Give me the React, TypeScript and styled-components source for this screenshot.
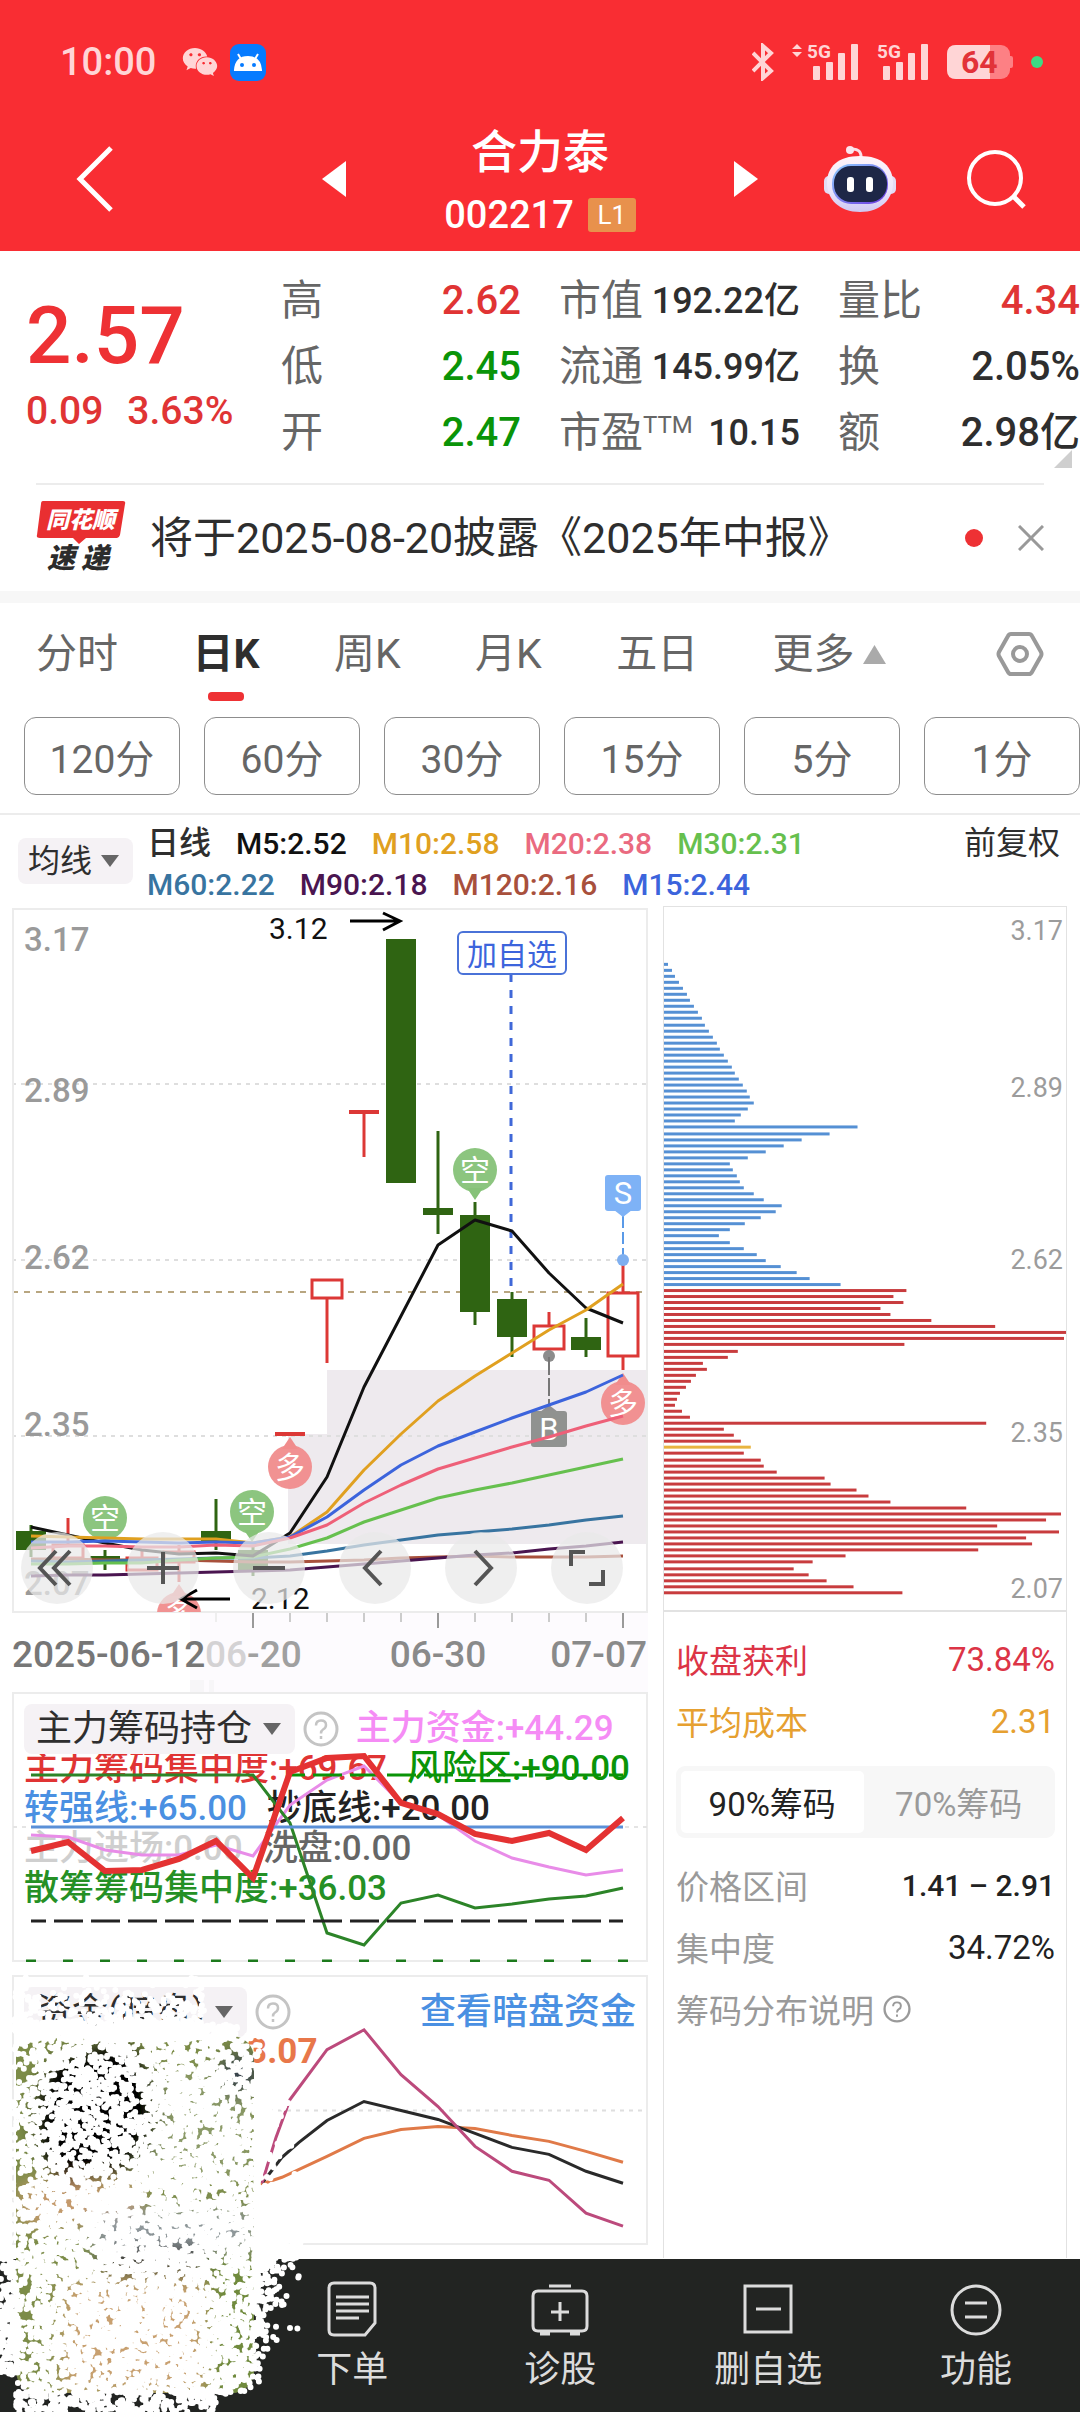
import React from "react";
import styled, { createGlobalStyle, css } from "styled-components";
import { FaWeixin } from "react-icons/fa";

const FONT = `Roboto, "Noto Sans CJK SC", sans-serif`;

const color = {
  brand: "#f92d33",
  rise: "#e03434",
  fall: "#0a9408",
  ink: "#2e2e2e",
  mid: "#666666",
  soft: "#9a9a9a",
  line: "#ececec",
  pill: "#f5f2f5",
  blue: "#4a90e2",
};

const Global = createGlobalStyle`
  *, *::before, *::after { box-sizing: border-box; }
  body { margin: 0; background: #fff; font-family: ${FONT}; color: ${color.ink}; }
  button, select { font-family: inherit; color: inherit; background: none; border: 0; padding: 0; margin: 0; cursor: pointer; }
  svg { display: block; flex: none; }
  p, h1, dl, dt, dd { margin: 0; font-weight: inherit; }
`;

const Page = styled.div`
  position: relative;
  display: flex;
  flex-direction: column;
  min-height: 100vh;
  overflow: hidden;
`;

/* ---------- header ---------- */

const Header = styled.header`
  background: ${color.brand};
  color: #fff;
`;

const StatusBar = styled.div`
  display: flex;
  align-items: center;
  justify-content: space-between;
  height: 116px;
  padding: 8px 37px 0 60px;
  color: #ffd5d6;
`;

const StatusGroup = styled.div<{ $gap: number }>`
  display: flex;
  align-items: center;
  gap: ${(p) => p.$gap}px;
`;

const Clock = styled.span`
  font-size: 38px;
  font-weight: 500;
  line-height: 40px;
  margin-right: 14px;
`;

const LiveDot = styled.span<{ $size: number; $fill: string }>`
  width: ${(p) => p.$size}px;
  height: ${(p) => p.$size}px;
  border-radius: 50%;
  background: ${(p) => p.$fill};
  flex: none;
`;

const TitleBar = styled.div`
  display: grid;
  grid-template-columns: 1fr 436px 1fr;
  align-items: center;
  height: 135px;
  padding-bottom: 9px;
`;

const BackSide = styled.div`
  padding-left: 76px;
`;

const ToolSide = styled.div`
  display: flex;
  justify-content: flex-end;
  align-items: center;
  gap: 70px;
  padding-right: 54px;
`;

const IconButton = styled.button`
  display: flex;
  align-items: center;
  justify-content: center;
`;

const Stepper = styled.div`
  display: flex;
  align-items: center;
  justify-content: space-between;
`;

const StockTitle = styled.div`
  display: flex;
  flex-direction: column;
  align-items: center;
`;

const StockName = styled.h1`
  font-size: 46px;
  font-weight: 500;
  line-height: 72px;
`;

const StockCode = styled.p`
  display: flex;
  align-items: center;
  gap: 14px;
  font-size: 38px;
  font-weight: 500;
  line-height: 54px;
`;

const LevelBadge = styled.span`
  width: 48px;
  border-radius: 3px;
  background: #e8914c;
  font-size: 26px;
  font-weight: 400;
  line-height: 34px;
  text-align: center;
`;

/* ---------- quote ---------- */

const Quote = styled.section`
  position: relative;
  display: grid;
  grid-template-columns: 217fr 240fr 241fr 242fr;
  column-gap: 38px;
  padding: 17px 0 17px 26px;
`;

const PriceBox = styled.div`
  color: ${color.rise};
  padding-top: 18px;
`;

const Price = styled.p`
  color: #ee3134;
  font-size: 80px;
  font-weight: 500;
  line-height: 100px;
`;

const Change = styled.p`
  display: flex;
  gap: 24px;
  font-size: 39px;
  font-weight: 500;
  line-height: 50px;
  white-space: nowrap;
`;

const Stats = styled.dl``;

const Stat = styled.div`
  display: flex;
  justify-content: space-between;
  align-items: center;
  height: 66px;
  line-height: 66px;
  white-space: nowrap;
`;

const StatName = styled.dt`
  color: ${color.mid};
  font-size: 42px;
  display: flex;
`;

const Sup = styled.sup`
  font-size: 24px;
  line-height: 50px;
`;

const StatValue = styled.dd<{ $tone?: string; $small?: boolean }>`
  color: ${(p) => p.$tone ?? color.ink};
  font-size: ${(p) => (p.$small ? 36 : 40)}px;
  font-weight: 500;
`;

const Corner = styled.span`
  position: absolute;
  right: 8px;
  bottom: 15px;
  border-left: 18px solid transparent;
  border-bottom: 18px solid #cfcfcf;
`;

const Notice = styled.section`
  display: flex;
  align-items: center;
  margin: 0 36px;
  height: 108px;
  border-top: 2px solid ${color.line};
`;

const NoticeLink = styled.a`
  flex: 1;
  margin-left: 24px;
  color: ${color.ink};
  font-size: 43px;
  line-height: 60px;
  text-decoration: none;
`;

const Band = styled.div`
  height: 12px;
  background: #f7f7f7;
`;

/* ---------- period tabs ---------- */

const Tabs = styled.nav`
  display: flex;
  align-items: center;
  justify-content: space-between;
  height: 102px;
  padding: 0 36px;
`;

const Tab = styled.button<{ $on?: boolean }>`
  position: relative;
  display: flex;
  align-items: center;
  gap: 8px;
  color: ${(p) => (p.$on ? color.ink : color.mid)};
  font-size: 41px;
  font-weight: ${(p) => (p.$on ? 700 : 400)};
  line-height: 60px;
  ${(p) =>
    p.$on &&
    css`
      &::after {
        content: "";
        position: absolute;
        left: 50%;
        bottom: -17px;
        width: 36px;
        height: 9px;
        margin-left: -18px;
        border-radius: 4px;
        background: #ee3134;
      }
    `}
`;

const LastTab = styled(Tab)`
  margin-right: 36px;
`;

const Minutes = styled.div`
  display: grid;
  grid-template-columns: repeat(6, 1fr);
  gap: 24px;
  padding: 12px 0 18px 24px;
  border-bottom: 2px solid ${color.line};
`;

const Minute = styled.button`
  height: 78px;
  border: 1px solid #8d8d8d;
  border-radius: 12px;
  color: ${color.mid};
  font-size: 39px;
`;

/* ---------- averages ---------- */

const Averages = styled.section`
  display: flex;
  align-items: flex-start;
  gap: 14px;
  height: 91px;
  padding: 8px 20px 0 18px;
`;

const AverageLines = styled.div`
  flex: 1;
  font-size: 30px;
  font-weight: 500;
  line-height: 41px;
`;

const AverageLine = styled.div`
  display: flex;
  gap: 25px;
`;

const LineName = styled.span`
  font-size: 32px;
`;

const Tint = styled.span<{ $tone: string }>`
  color: ${(p) => p.$tone};
`;

const Adjust = styled.button`
  font-size: 32px;
  line-height: 41px;
`;

const PickerWrap = styled.label<{ $low?: boolean }>`
  position: relative;
  display: inline-flex;
  align-items: center;
  flex: none;
  margin-top: ${(p) => (p.$low ? 15 : 0)}px;
`;

const Select = styled.select<{ $size: number }>`
  appearance: none;
  height: ${(p) => p.$size + 14}px;
  padding: 0 ${(p) => (p.$size > 33 ? 42 : 40)}px 0 ${(p) => (p.$size > 33 ? 12 : 10)}px;
  border-radius: 8px;
  background: ${color.pill};
  font-size: ${(p) => p.$size}px;
  line-height: ${(p) => p.$size + 14}px;
`;

const PickerArrow = styled.span`
  position: absolute;
  right: 14px;
  border: 9px solid transparent;
  border-top: 12px solid ${color.mid};
  border-bottom: 0;
  pointer-events: none;
`;

/* ---------- workspace ---------- */

const Workspace = styled.main`
  display: grid;
  grid-template-columns: 636fr 404fr;
  column-gap: 15px;
  padding: 0 13px 0 12px;
`;

const Column = styled.div`
  padding: 2px 0 13px;
`;

const ChartArea = styled.div`
  position: relative;
`;

const Drawing = styled.svg`
  width: 100%;
  height: auto;
  font-family: ${FONT};
`;

const FloatBar = styled.div`
  position: absolute;
  left: 9px;
  right: 25px;
  bottom: 88px;
  display: flex;
  justify-content: space-between;
`;

const FloatButton = styled.button`
  width: 72px;
  height: 72px;
  border-radius: 50%;
  background: rgba(233, 233, 233, 0.72);
  display: flex;
  align-items: center;
  justify-content: center;
`;

const Panel = styled.section`
  position: relative;
  height: 270px;
  padding: 15px 10px 0;
  border: 2px solid ${color.line};
  & + & {
    margin-top: 13px;
  }
`;

const Overlay = styled.svg`
  position: absolute;
  top: -2px;
  left: -2px;
  width: calc(100% + 4px);
  height: calc(100% + 4px);
  pointer-events: none;
`;

const LegendLine = styled.div<{ $gap?: number }>`
  display: flex;
  align-items: center;
  gap: ${(p) => p.$gap ?? 20}px;
  height: 40px;
  font-size: 35px;
  font-weight: 500;
  line-height: 40px;
  white-space: nowrap;
`;

const DarkPoolLink = styled.a`
  margin-left: auto;
  color: ${color.blue};
  font-size: 36px;
  text-decoration: none;
`;

const HiddenReading = styled.span`
  padding-left: 203px;
  color: #e8774a;
  font-weight: 700;
`;

/* ---------- chip distribution ---------- */

const Chips = styled.aside`
  border: 1px solid #e2e2e2;
  border-bottom: 0;
`;

const ChipInfo = styled.div`
  display: flex;
  flex-direction: column;
  padding: 16px 11px 0 12px;
  border-top: 2px solid #e2e2e2;
`;

const InfoRow = styled.div<{ $tone: string; $value?: string }>`
  display: flex;
  justify-content: space-between;
  align-items: center;
  height: 62px;
  font-size: 33px;
  color: ${(p) => p.$tone};
  & > :last-child {
    color: ${(p) => p.$value ?? p.$tone};
  }
`;

const Strong = styled.span`
  font-size: 30px;
  font-weight: 500;
`;

const Segments = styled.div`
  display: grid;
  grid-template-columns: 1fr 1fr;
  gap: 4px;
  margin: 14px 0 16px;
  padding: 5px;
  border-radius: 9px;
  background: #f7f7f7;
`;

const Segment = styled.button<{ $on?: boolean }>`
  height: 62px;
  border-radius: 5px;
  background: ${(p) => (p.$on ? "#fff" : "transparent")};
  color: ${(p) => (p.$on ? "#222" : color.soft)};
  font-size: 33px;
`;

const HelpRow = styled.button`
  display: flex;
  align-items: center;
  gap: 9px;
  height: 62px;
  color: ${color.soft};
  font-size: 33px;
`;

/* ---------- bottom bar ---------- */

const BottomBar = styled.footer`
  display: grid;
  grid-template-columns: repeat(4, 1fr);
  height: 153px;
  margin-top: auto;
  padding-left: 23%;
  background: #222422;
`;

const BottomItem = styled.button`
  display: flex;
  flex-direction: column;
  align-items: center;
  gap: 7px;
  padding-top: 22px;
  color: #dcdcdc;
  font-size: 36px;
  line-height: 52px;
`;

const Burst = styled.svg`
  position: absolute;
  left: 0;
  bottom: 0;
  width: 310px;
  height: 442px;
  pointer-events: none;
`;

/* ---------- icons ---------- */

const TextIcon = styled.svg`
  overflow: visible;
  font-family: ${FONT};
  font-weight: 700;
`;

const Signal = ({ arrows }: { arrows?: boolean }) => (
  <TextIcon width={arrows ? 67 : 52} height="38" viewBox={arrows ? "-15 0 67 38" : "0 0 52 38"} fill="#ffd5d6">
    {arrows && <path d="M-15 6l5-5 5 5zM-15 9l5 5 5-5z" />}
    <text x="0" y="15" fontSize="19">5G</text>
    <rect x="6" y="23" width="7" height="14" rx="1" />
    <rect x="19" y="19" width="7" height="18" rx="1" />
    <rect x="31" y="10" width="7" height="27" rx="1" />
    <rect x="44" y="1" width="7" height="36" rx="1" />
  </TextIcon>
);

const Battery = () => (
  <TextIcon width="66" height="34" viewBox="0 0 66 34">
    <rect width="63" height="34" rx="9" fill="#fd8084" />
    <path d="M62 11h2q2 0 2 2v8q0 2-2 2h-2z" fill="#fd8084" />
    <path d="M9 0H43V34H9Q0 34 0 25V9Q0 0 9 0z" fill="#ffd5d6" />
    <text x="14" y="28" fontSize="32" fill="#e23238">64</text>
  </TextIcon>
);

const Robot = () => (
  <svg width="72" height="68" viewBox="0 0 72 68">
    <defs>
      <linearGradient id="shell" x1="0" y1="0" x2="0" y2="1">
        <stop offset="0" stopColor="#fff4f8" />
        <stop offset="0.6" stopColor="#ece6fb" />
        <stop offset="1" stopColor="#cfc8f2" />
      </linearGradient>
      <linearGradient id="rim" x1="0" y1="0" x2="1" y2="1">
        <stop offset="0" stopColor="#8fd0ff" />
        <stop offset="1" stopColor="#6a35e0" />
      </linearGradient>
    </defs>
    <path d="M27 4Q38 3 37 14" fill="none" stroke="#fbdfe8" strokeWidth="3" />
    <circle cx="26" cy="5" r="4" fill="#fbe6ee" />
    <rect x="0" y="31" width="12" height="18" rx="5" fill="#e3dcf5" />
    <rect x="60" y="31" width="12" height="18" rx="5" fill="#e3dcf5" />
    <path d="M36 11C58 11 69 22 69 38S57 67 36 67 3 54 3 38 14 11 36 11z" fill="url(#shell)" />
    <rect x="8" y="19" width="56" height="40" rx="19" fill="url(#rim)" />
    <rect x="10" y="21" width="53" height="36" rx="17" fill="#1d2747" />
    <rect x="23" y="32" width="7" height="15" rx="3" fill="#fff" />
    <rect x="42" y="32" width="7" height="15" rx="3" fill="#fff" />
  </svg>
);

const Help = ({ size, tone = "#c4c4c4" }: { size: number; tone?: string }) => (
  <svg width={size} height={size} viewBox="0 0 36 36" fill="none" stroke={tone} strokeWidth="3">
    <circle cx="18" cy="18" r="16" />
    <path d="M13 14.500q0-5 5-5t5 4.500q0 3-3 4.500-2 1.200-2 4M18 25v3" strokeWidth="2.500" />
  </svg>
);

const Logo = () => (
  <TextIcon width="90" height="76" viewBox="0 0 90 76" aria-label="同花顺速递">
    <path d="M7 1H87q3 0 2 3l-5 31q-1 3-3 3H50l-7 6-6-6H4q-4 0-3-3L5 4q0-3 2-3z" fill="#e92f31" />
    <text x="10" y="28" fontSize="23" fontWeight="900" fontStyle="italic" fill="#fff">同花顺</text>
    <text x="11" y="68" fontSize="28" fontWeight="900" fontStyle="italic" fill="#2c2c2c">速<tspan dx="6">递</tspan></text>
  </TextIcon>
);

/* ---------- k-line chart ---------- */

const cx = (i: number) => 31 + i * 37;
const track = (ys: number[], from = 0) => ys.map((y, i) => `${cx(i + from)},${y}`).join(" ");

type Candle = { i: number; top: number; bottom: number; high: number; low: number; up: boolean };

const candles: Candle[] = [
  { i: 0, top: 1531, bottom: 1550, high: 1525, low: 1557, up: false },
  { i: 1, top: 1545, bottom: 1558, high: 1518, low: 1558, up: true },
  { i: 2, top: 1556, bottom: 1559, high: 1550, low: 1570, up: false },
  { i: 3, top: 1558, bottom: 1570, high: 1550, low: 1570, up: true },
  { i: 4, top: 1552, bottom: 1562, high: 1545, low: 1582, up: true },
  { i: 5, top: 1531, bottom: 1543, high: 1499, low: 1550, up: false },
  { i: 6, top: 1550, bottom: 1570, high: 1547, low: 1576, up: false },
  { i: 7, top: 1433, bottom: 1435, high: 1433, low: 1435, up: true },
  { i: 8, top: 1280, bottom: 1298, high: 1280, low: 1363, up: true },
  { i: 9, top: 1111, bottom: 1113, high: 1111, low: 1157, up: true },
  { i: 10, top: 939, bottom: 1183, high: 939, low: 1183, up: false },
  { i: 11, top: 1208, bottom: 1215, high: 1131, low: 1234, up: false },
  { i: 12, top: 1215, bottom: 1312, high: 1202, low: 1325, up: false },
  { i: 13, top: 1299, bottom: 1337, high: 1292, low: 1357, up: false },
  { i: 14, top: 1326, bottom: 1349, high: 1312, low: 1357, up: true },
  { i: 15, top: 1337, bottom: 1350, high: 1318, low: 1357, up: false },
  { i: 16, top: 1293, bottom: 1356, high: 1260, low: 1370, up: true },
];

const averages: { tone: string; ys: number[] }[] = [
  { tone: "#a8503c", ys: [1559, 1559, 1560, 1560, 1560, 1561, 1562, 1562, 1561, 1560, 1558, 1557, 1556, 1557, 1557, 1557, 1556] },
  { tone: "#4a1550", ys: [1576, 1575, 1575, 1574, 1573, 1572, 1571, 1570, 1567, 1564, 1561, 1558, 1555, 1553, 1549, 1546, 1542] },
  { tone: "#3874a0", ys: [1561, 1562, 1561, 1560, 1559, 1558, 1558, 1556, 1551, 1545, 1540, 1535, 1532, 1529, 1525, 1520, 1516] },
  { tone: "#66c04e", ys: [1564, 1564, 1563, 1563, 1560, 1558, 1557, 1549, 1538, 1522, 1510, 1498, 1490, 1483, 1475, 1467, 1459] },
  { tone: "#111111", ys: [1527, 1535, 1543, 1550, 1554, 1553, 1556, 1533, 1477, 1387, 1316, 1245, 1220, 1231, 1273, 1308, 1323] },
  { tone: "#e0a020", ys: [1536, 1537, 1538, 1539, 1539, 1539, 1543, 1537, 1512, 1470, 1434, 1401, 1376, 1353, 1330, 1310, 1284] },
  { tone: "#3c64dc", ys: [1542, 1542, 1541, 1542, 1543, 1542, 1543, 1537, 1517, 1490, 1465, 1446, 1432, 1418, 1405, 1392, 1375] },
  { tone: "#ee6078", ys: [1548, 1546, 1546, 1547, 1547, 1545, 1546, 1538, 1525, 1503, 1485, 1469, 1458, 1447, 1437, 1426, 1416] },
];

const priceMarks: [string, number][] = [["3.17", 939], ["2.89", 1090], ["2.62", 1257], ["2.35", 1424], ["2.07", 1583]];

const CandleShape = ({ c }: { c: Candle }) => {
  const x = cx(c.i);
  const tone = c.up ? "#dc3836" : "#2f6412";
  return (
    <g stroke={tone} strokeWidth="3">
      {c.high < c.top && <line x1={x} x2={x} y1={c.high} y2={c.top} />}
      {c.low > c.bottom && <line x1={x} x2={x} y1={c.bottom} y2={c.low} />}
      {c.up ? (
        c.bottom - c.top < 4 ? (
          <line x1={x - 15} x2={x + 15} y1={c.top + 1} y2={c.top + 1} strokeWidth="4" />
        ) : (
          <rect x={x - 15} y={c.top} width="30" height={c.bottom - c.top} fill="#fff" />
        )
      ) : (
        <rect x={x - 15} y={c.top} width="30" height={c.bottom - c.top} fill={tone} stroke="none" />
      )}
    </g>
  );
};

const Pin = ({ x, y, long, tail = true }: { x: number; y: number; long?: boolean; tail?: boolean }) => (
  <g>
    {tail && <path d={long ? `M${x - 8} ${y - 18}L${x} ${y - 30}l8 12z` : `M${x - 8} ${y + 18}L${x} ${y + 30}l8-12z`} fill={long ? "#f08c8c" : "#86c278"} />}
    <circle cx={x} cy={y} r="22" fill={long ? "#f08c8c" : "#86c278"} fillOpacity="0.950" />
    <text x={x} y={y + 11} fontSize="30" textAnchor="middle" fill="#fff">{long ? "多" : "空"}</text>
  </g>
);

const KLine = () => (
  <Drawing viewBox="12 908 636 784" role="img" aria-label="日K线图">
    <defs>
      <clipPath id="plot"><rect x="12" y="908" width="636" height="704" /></clipPath>
    </defs>
    <path d="M190 1612H648V1692H190z" fill="#fdfbfe" />
    <path d="M190 1680H204V1692H190zM209 1680H214V1692H209z" fill="#f7f6f8" />
    <path d="M288 1434H327V1370H648V1544H288z" fill="#eeeaee" />
    <g stroke="#dedede" strokeWidth="2" strokeDasharray="4 5">
      {[1084, 1260, 1436].map((y) => <line key={y} x1="12" x2="648" y1={y} y2={y} />)}
    </g>
    <line x1="12" x2="642" y1="1292" y2="1292" stroke="#b8a680" strokeWidth="2" strokeDasharray="6 6" />
    <rect x="13" y="909" width="634" height="703" fill="none" stroke={color.line} strokeWidth="2" />
    <g fontSize="33" fontWeight="500" fill="#9a9a9a">
      {priceMarks.map(([t, y]) => <text key={t} x="24" y={y + 12}>{t}</text>)}
    </g>
    <line x1="511" x2="511" y1="974" y2="1292" stroke="#4068d8" strokeWidth="3" strokeDasharray="8 8" />
    <rect x="458" y="932" width="108" height="42" rx="5" fill="#fff" stroke="#4a72d8" strokeWidth="2" />
    <text x="512" y="965" fontSize="30" textAnchor="middle" fill="#3c64dc">加自选</text>
    {candles.map((c) => <CandleShape key={c.i} c={c} />)}
    <g fill="none" stroke="#000" strokeWidth="3">
      <path d="M350 921H400M383 913L400 921L383 930" />
    </g>
    <text x="269" y="939" fontSize="30" fill="#111">3.12</text>
    <g>
      <line x1="623" x2="623" y1="1216" y2="1260" stroke="#5a9ae8" strokeWidth="2" strokeDasharray="12 4" />
      <circle cx="623" cy="1260" r="6" fill="#7eaff0" />
      <path d="M614 1210L623 1217L632 1210z" fill="#7eb2f6" />
      <rect x="605" y="1175" width="36" height="36" rx="3" fill="#7eb2f6" />
      <text x="623" y="1204" fontSize="31" textAnchor="middle" fill="#fff">S</text>
      <circle cx="549" cy="1356" r="6" fill="#8c8c8c" />
      <line x1="549" x2="549" y1="1357" y2="1408" stroke="#777" strokeWidth="2" strokeDasharray="18 3" />
      <path d="M540 1412L549 1405L558 1412z" fill="#909090" />
      <rect x="531" y="1411" width="36" height="36" rx="3" fill="#909290" />
      <text x="549" y="1440" fontSize="31" textAnchor="middle" fill="#fff">B</text>
    </g>
    <g clipPath="url(#plot)">
      <Pin x={475} y={1170} />
      <Pin x={105} y={1518} tail={false} />
      <Pin x={252} y={1512} />
      <Pin x={290} y={1467} long />
      <Pin x={623} y={1403} long />
      <Pin x={179} y={1614} long />
    </g>
    <g fill="none" strokeWidth="3" strokeLinejoin="round">
      {averages.map((a) => <polyline key={a.tone} points={track(a.ys)} stroke={a.tone} />)}
    </g>
    <path d="M230 1599H181M197 1590L181 1599L197 1608" fill="none" stroke="#000" strokeWidth="3" />
    <text x="251" y="1609" fontSize="30" fill="#111">2.12</text>
    {[5, 6, 7, 8, 9, 10, 11, 12, 13, 14, 15, 16].map((i) => {
      const major = i === 6 || i === 11 || i === 16;
      return <line key={i} x1={cx(i)} x2={cx(i)} y1="1613" y2={major ? 1628 : 1622} stroke={major ? "#9a9a9a" : i === 5 ? "#eee" : "#ccc"} strokeWidth="2" />;
    })}
    <g fontSize="37" fontWeight="500" fill="#8a8a8a">
      <text x="12" y="1667" fill="#777">2025-06-12</text>
      <text x="205" y="1667" fill="#d4d2d4">06<tspan fill="#a0a0a0">-20</tspan></text>
      <text x="438" y="1667" textAnchor="middle">06-30</text>
      <text x="647" y="1667" textAnchor="end">07-07</text>
    </g>
  </Drawing>
);

const floatIcons: [string, string][] = [
  ["最早", "M21 5L5 22L21 39M35 5L19 22L35 39"],
  ["放大", "M22 6V38M6 22H38"],
  ["缩小", "M6 22H38"],
  ["向左", "M28 5L12 22L28 39"],
  ["向右", "M16 5L32 22L16 39"],
  ["全屏", "M6 20V6H20M38 24V38H24"],
];

/* ---------- chip bars ---------- */

const chipWidths = [
  4, 8, 11, 15, 19, 23, 26, 30, 34, 38, 41, 45, 49, 53, 56, 60, 64, 68, 71, 75, 79, 83, 86, 90, 84, 77, 71, 194, 166, 138, 120, 102, 84, 66, 69,
  73, 76, 80, 90, 100, 118, 112, 97, 81, 66, 55, 66, 80, 93, 102, 117, 133, 146, 177, 243, 230, 240, 217, 227, 268, 332, 403, 401, 241, 74, 64,
  39, 43, 32, 27, 22, 16, 13, 11, 18, 26, 323, 60, 70, 77, 87, 80, 97, 100, 113, 161, 167, 193, 205, 227, 303, 398, 383, 334, 396, 363, 369, 315,
  182, 149, 130, 145, 163, 190, 239,
];

const barTone = (i: number) => (i === 80 ? "#e8b440" : i < 54 ? "#5590d4" : "#c83c3e");

const chipMarks: [string, number][] = [["3.17", 930], ["2.89", 1087], ["2.62", 1260], ["2.35", 1433], ["2.07", 1590]];

const ChipChart = () => (
  <Drawing viewBox="664 907 403 705" role="img" aria-label="筹码分布">
    {chipWidths.map((w, i) => (
      <rect key={i} x="664" y={963 + Math.round(i * 6.055)} width={w} height="3" fill={barTone(i)} />
    ))}
    <g fontSize="27" fill="#9c9c9c" textAnchor="end">
      {chipMarks.map(([t, y]) => <text key={t} x="1064" y={y + 10}>{t}</text>)}
    </g>
  </Drawing>
);

/* ---------- particle burst over a photo thumbnail ---------- */

const makeDots = () => {
  let s = 20250707;
  const rnd = () => {
    s = (s * 1664525 + 1013904223) % 4294967296;
    return s / 4294967296;
  };
  let d = "";
  const dot = (x: number, y: number, r = 3) => {
    d += `M${(x - r).toFixed(1)} ${y.toFixed(1)}a${r} ${r} 0 1 0 ${2 * r} 0a${r} ${r} 0 1 0 ${-2 * r} 0`;
  };
  for (let n = 0; n < 9000; n++) {
    const x = rnd() * 260;
    const y = 58 + rnd() * 366;
    const edge = Math.pow(Math.abs(x - 138) / 126, 7) + Math.pow(Math.abs(y - 250) / 210, 8);
    const dark = Math.pow((x - 90) / 56, 2) + Math.pow((y - 150) / 72, 2) < 1 ? 0.35 : 0;
    if (rnd() > Math.max(edge * 0.8, dark)) dot(x, y);
  }
  for (let n = 0; n < 520; n++) dot(14 + rnd() * 190, 66 - rnd() * rnd() * 62);
  for (let n = 0; n < 90; n++) dot(190 + rnd() * 50, 54 + rnd() * 14);
  for (let n = 0; n < 380; n++) dot(22 + rnd() * 172, 52 + rnd() * 18);
  for (let n = 0; n < 240; n++) dot(254 + rnd() * rnd() * 48, 270 + rnd() * rnd() * 130);
  for (let n = 0; n < 190; n++) dot(rnd() * 18, 288 + rnd() * 116);
  for (let n = 0; n < 300; n++) dot(16 + rnd() * 200, 422 + rnd() * 20);
  for (let n = 0; n < 110; n++) dot(254 + rnd() * rnd() * 50, 130 + rnd() * 100);
  return d;
};

const dots = makeDots();

const ParticleBurst = () => (
  <Burst viewBox="0 0 310 442" aria-hidden="true">
    <defs>
      <clipPath id="thumb"><rect x="16" y="66" width="238" height="357" rx="22" /></clipPath>
      <filter id="photo"><feGaussianBlur stdDeviation="9" /></filter>
    </defs>
    <g clipPath="url(#thumb)">
      <rect x="16" y="66" width="238" height="357" fill="#7c8c48" />
      <g filter="url(#photo)">
        <rect x="130" y="100" width="124" height="110" fill="#8b9a68" />
        <ellipse cx="72" cy="150" rx="36" ry="66" fill="#000" />
        <ellipse cx="110" cy="140" rx="50" ry="66" fill="#000" />
        <circle cx="238" cy="105" r="22" fill="#39424c" />
        <rect x="20" y="212" width="120" height="44" fill="#c49a6c" />
        <rect x="90" y="240" width="164" height="40" fill="#8f989c" />
        <rect x="100" y="276" width="110" height="28" fill="#3a3830" />
        <rect x="60" y="310" width="150" height="113" fill="#c8a070" />
        <rect x="205" y="290" width="60" height="143" fill="#6f8a3e" />
      </g>
    </g>
    <path d={dots} fill="#fff" />
  </Burst>
);

/* ---------- picker ---------- */

const Picker = ({ name, value, size, low }: { name: string; value: string; size: number; low?: boolean }) => (
  <PickerWrap $low={low}>
    <Select $size={size} aria-label={name} defaultValue={value}>
      <option>{value}</option>
    </Select>
    <PickerArrow />
  </PickerWrap>
);

const LINE_ICON = { fill: "none", stroke: "#dcdcdc", strokeWidth: 3 };

export default function App() {
  return (
    <Page>
      <Global />
      <Header>
        <StatusBar>
          <StatusGroup $gap={12}>
            <Clock>10:00</Clock>
            <FaWeixin size={36} />
            <svg width="36" height="37" viewBox="0 0 36 37">
              <rect width="36" height="37" rx="9" fill="#067bff" />
              <path d="M5 26q1-13 13-13t13 13zM11 15L8 10M25 15l3-5" fill="#fff" stroke="#fff" strokeWidth="2" />
              <circle cx="12" cy="21" r="2" fill="#067bff" />
              <circle cx="24" cy="21" r="2" fill="#067bff" />
            </svg>
          </StatusGroup>
          <StatusGroup $gap={18}>
            <svg width="22" height="38" viewBox="0 0 22 38" fill="none" stroke="#ffd5d6" strokeWidth="4">
              <path d="M1 10L19 28L11 35V3L19 10L1 28" />
            </svg>
            <Signal arrows />
            <Signal />
            <Battery />
            <LiveDot $size={12} $fill="#3ddc84" />
          </StatusGroup>
        </StatusBar>
        <TitleBar>
          <BackSide>
            <IconButton aria-label="返回">
              <svg width="38" height="66" viewBox="0 0 38 66" fill="none" stroke="#fff" strokeWidth="5">
                <path d="M35 2L4 33L35 64" />
              </svg>
            </IconButton>
          </BackSide>
          <Stepper>
            <IconButton aria-label="上一只">
              <svg width="24" height="36" viewBox="0 0 24 36"><path d="M24 0V36L0 18z" fill="#fff" /></svg>
            </IconButton>
            <StockTitle>
              <StockName>合力泰</StockName>
              <StockCode>002217<LevelBadge>L1</LevelBadge></StockCode>
            </StockTitle>
            <IconButton aria-label="下一只">
              <svg width="24" height="36" viewBox="0 0 24 36"><path d="M0 0V36L24 18z" fill="#fff" /></svg>
            </IconButton>
          </Stepper>
          <ToolSide>
            <IconButton aria-label="智能助手"><Robot /></IconButton>
            <IconButton aria-label="搜索">
              <svg width="60" height="60" viewBox="0 0 60 60" fill="none" stroke="#fff" strokeWidth="4">
                <circle cx="29" cy="29" r="26" />
                <path d="M47 47L58 58" strokeWidth="5" />
              </svg>
            </IconButton>
          </ToolSide>
        </TitleBar>
      </Header>

      <Quote>
        <PriceBox>
          <Price>2.57</Price>
          <Change><span>0.09</span><span>3.63%</span></Change>
        </PriceBox>
        <Stats>
          <Stat><StatName>高</StatName><StatValue $tone={color.rise}>2.62</StatValue></Stat>
          <Stat><StatName>低</StatName><StatValue $tone={color.fall}>2.45</StatValue></Stat>
          <Stat><StatName>开</StatName><StatValue $tone={color.fall}>2.47</StatValue></Stat>
        </Stats>
        <Stats>
          <Stat><StatName>市值</StatName><StatValue $small>192.22亿</StatValue></Stat>
          <Stat><StatName>流通</StatName><StatValue $small>145.99亿</StatValue></Stat>
          <Stat><StatName>市盈<Sup>TTM</Sup></StatName><StatValue $small>10.15</StatValue></Stat>
        </Stats>
        <Stats>
          <Stat><StatName>量比</StatName><StatValue $tone={color.rise}>4.34</StatValue></Stat>
          <Stat><StatName>换</StatName><StatValue>2.05%</StatValue></Stat>
          <Stat><StatName>额</StatName><StatValue>2.98亿</StatValue></Stat>
        </Stats>
        <Corner />
      </Quote>

      <Notice>
        <Logo />
        <NoticeLink href="#notice">将于2025-08-20披露《2025年中报》</NoticeLink>
        <StatusGroup $gap={35}>
          <LiveDot $size={18} $fill="#ee3134" />
          <IconButton aria-label="关闭">
            <svg width="26" height="26" viewBox="0 0 26 26" stroke="#999" strokeWidth="3"><path d="M1 1L25 25M25 1L1 25" /></svg>
          </IconButton>
        </StatusGroup>
      </Notice>
      <Band />

      <Tabs>
        <Tab>分时</Tab>
        <Tab $on>日K</Tab>
        <Tab>周K</Tab>
        <Tab>月K</Tab>
        <Tab>五日</Tab>
        <LastTab>
          更多
          <svg width="23" height="19" viewBox="0 0 23 19"><path d="M11.500 0L23 19H0z" fill="#aaa" /></svg>
        </LastTab>
        <IconButton aria-label="设置">
          <svg width="48" height="46" viewBox="0 0 48 46" fill="none" stroke="#999" strokeWidth="4">
            <path d="M15 3H33Q35 3 36 5L45 21Q46 23 45 25L36 41Q35 43 33 43H15Q13 43 12 41L3 25Q2 23 3 21L12 5Q13 3 15 3z" />
            <circle cx="24" cy="23" r="7" />
          </svg>
        </IconButton>
      </Tabs>
      <Minutes>
        {["120分", "60分", "30分", "15分", "5分", "1分"].map((m) => <Minute key={m}>{m}</Minute>)}
      </Minutes>

      <Averages>
        <Picker name="主图指标" value="均线" size={32} low />
        <AverageLines>
          <AverageLine>
            <LineName>日线</LineName>
            <Tint $tone="#111">M5:2.52</Tint>
            <Tint $tone="#e0a020">M10:2.58</Tint>
            <Tint $tone="#ea6a80">M20:2.38</Tint>
            <Tint $tone="#66c04e">M30:2.31</Tint>
          </AverageLine>
          <AverageLine>
            <Tint $tone="#3874a0">M60:2.22</Tint>
            <Tint $tone="#4a1550">M90:2.18</Tint>
            <Tint $tone="#a8503c">M120:2.16</Tint>
            <Tint $tone="#3c64dc">M15:2.44</Tint>
          </AverageLine>
        </AverageLines>
        <Adjust>前复权</Adjust>
      </Averages>

      <Workspace>
        <Column>
          <ChartArea>
            <KLine />
            <FloatBar>
              {floatIcons.map(([name, d]) => (
                <FloatButton key={name} aria-label={name}>
                  <svg width="44" height="44" viewBox="0 0 44 44" fill="none" stroke="#555" strokeWidth="4"><path d={d} /></svg>
                </FloatButton>
              ))}
            </FloatBar>
          </ChartArea>
          <Panel>
            <LegendLine $gap={8}>
              <Picker name="副图指标一" value="主力筹码持仓" size={36} />
              <Help size={36} />
              <Tint $tone="#f58cf5">&nbsp;主力资金:+44.29</Tint>
            </LegendLine>
            <LegendLine><Tint $tone="#e03434">主力筹码集中度:+69.67</Tint><Tint $tone="#0a9408">风险区:+90.00</Tint></LegendLine>
            <LegendLine><Tint $tone={color.blue}>转强线:+65.00</Tint><Tint $tone="#222">抄底线:+20.00</Tint></LegendLine>
            <LegendLine><Tint $tone="#cfcfcf">主力进场:0.00</Tint><Tint $tone={color.mid}>洗盘:0.00</Tint></LegendLine>
            <LegendLine><Tint $tone="#259025">散筹筹码集中度:+36.03</Tint></LegendLine>
            <Overlay viewBox="12 1692 636 270" preserveAspectRatio="none" fill="none">
              <line x1="13" x2="647" y1="1827" y2="1827" stroke="#e4e4e4" strokeWidth="2" strokeDasharray="4 5" />
              <polyline points={track([1835, 1837, 1850, 1855, 1855, 1845, 1856, 1805, 1780, 1766, 1803, 1815, 1841, 1858, 1867, 1875, 1870])} stroke="#e88ce8" strokeWidth="3" />
              <line x1="290" x2="623" y1="1775" y2="1775" stroke="#0a9408" strokeWidth="3" strokeDasharray="29 8" strokeDashoffset="14" />
              <polyline points={track([1775, 1775, 1775, 1775, 1775, 1775, 1775, 1823, 1933, 1945, 1903, 1895, 1908, 1904, 1899, 1896, 1888])} stroke="#2c8428" strokeWidth="3" />
              <line x1="31" x2="623" y1="1827" y2="1827" stroke="#5a90d8" strokeWidth="3" />
              <line x1="31" x2="623" y1="1921" y2="1921" stroke="#222" strokeWidth="3" strokeDasharray="29 8" strokeDashoffset="14" />
              <polyline points={track([1851, 1842, 1871, 1870, 1859, 1841, 1878, 1772, 1758, 1756, 1803, 1814, 1834, 1841, 1833, 1850, 1818])} stroke="#e43232" strokeWidth="6" />
              <line x1="26" x2="628" y1="1961" y2="1961" stroke="#1c7a1c" strokeWidth="3" strokeDasharray="10 27" />
            </Overlay>
          </Panel>
          <Panel>
            <LegendLine $gap={8}>
              <Picker name="副图指标二" value="资金(暗盘)" size={36} />
              <Help size={36} />
              <DarkPoolLink href="#dark-pool">查看暗盘资金</DarkPoolLink>
            </LegendLine>
            <LegendLine><HiddenReading>53.07</HiddenReading></LegendLine>
            <Overlay viewBox="12 1975 636 271" preserveAspectRatio="none" fill="none" strokeWidth="3">
              <line x1="260" x2="647" y1="2111" y2="2111" stroke="#dedede" strokeWidth="2" strokeDasharray="4 5" />
              <polyline points={"258,2186 282,2178 " + track([2157, 2139, 2130, 2127, 2129, 2136, 2142, 2152, 2163], 8)} stroke="#e07a48" />
              <polyline points={"262,2184 282,2158 299,2143 " + track([2121, 2102, 2111, 2120, 2134, 2148, 2155, 2172, 2184], 8)} stroke="#2a2a2a" />
              <polyline points={"262,2184 276,2138 " + track([2100, 2050, 2030, 2075, 2107, 2147, 2172, 2181, 2214, 2227], 7)} stroke="#bc4a7c" />
            </Overlay>
          </Panel>
        </Column>

        <Chips>
          <ChipChart />
          <ChipInfo>
            <InfoRow $tone="#dc3446"><span>收盘获利</span><span>73.84%</span></InfoRow>
            <InfoRow $tone="#e6a030"><span>平均成本</span><span>2.31</span></InfoRow>
            <Segments>
              <Segment $on aria-pressed="true">90%筹码</Segment>
              <Segment aria-pressed="false">70%筹码</Segment>
            </Segments>
            <InfoRow $tone={color.soft} $value="#222"><span>价格区间</span><Strong>1.41 – 2.91</Strong></InfoRow>
            <InfoRow $tone={color.soft} $value="#222"><span>集中度</span><span>34.72%</span></InfoRow>
            <HelpRow>筹码分布说明<Help size={28} tone="#9a9a9a" /></HelpRow>
          </ChipInfo>
        </Chips>
      </Workspace>

      <BottomBar>
        <BottomItem>
          <svg width="50" height="56" viewBox="0 0 50 56" {...LINE_ICON}>
            <path d="M7 2H43Q48 2 48 7V42L38 54H7Q2 54 2 49V7Q2 2 7 2zM9 16H42M9 23H42M9 30H42M9 37H32" />
          </svg>
          下单
        </BottomItem>
        <BottomItem>
          <svg width="58" height="56" viewBox="0 0 58 56" {...LINE_ICON}>
            <path d="M18 5H40M7 10H51Q56 10 56 15V45Q56 50 51 50H7Q2 50 2 45V15Q2 10 7 10zM29 21V40M20 31H38M9 53H19M39 53H49" />
          </svg>
          诊股
        </BottomItem>
        <BottomItem>
          <svg width="50" height="56" viewBox="0 0 50 56" {...LINE_ICON}>
            <path d="M2 5H48V51H2zM13 28H38" />
          </svg>
          删自选
        </BottomItem>
        <BottomItem>
          <svg width="52" height="56" viewBox="0 0 52 56" {...LINE_ICON}>
            <circle cx="26" cy="29" r="24" />
            <path d="M15 22H37M15 36H37" />
          </svg>
          功能
        </BottomItem>
      </BottomBar>
      <ParticleBurst />
    </Page>
  );
}
